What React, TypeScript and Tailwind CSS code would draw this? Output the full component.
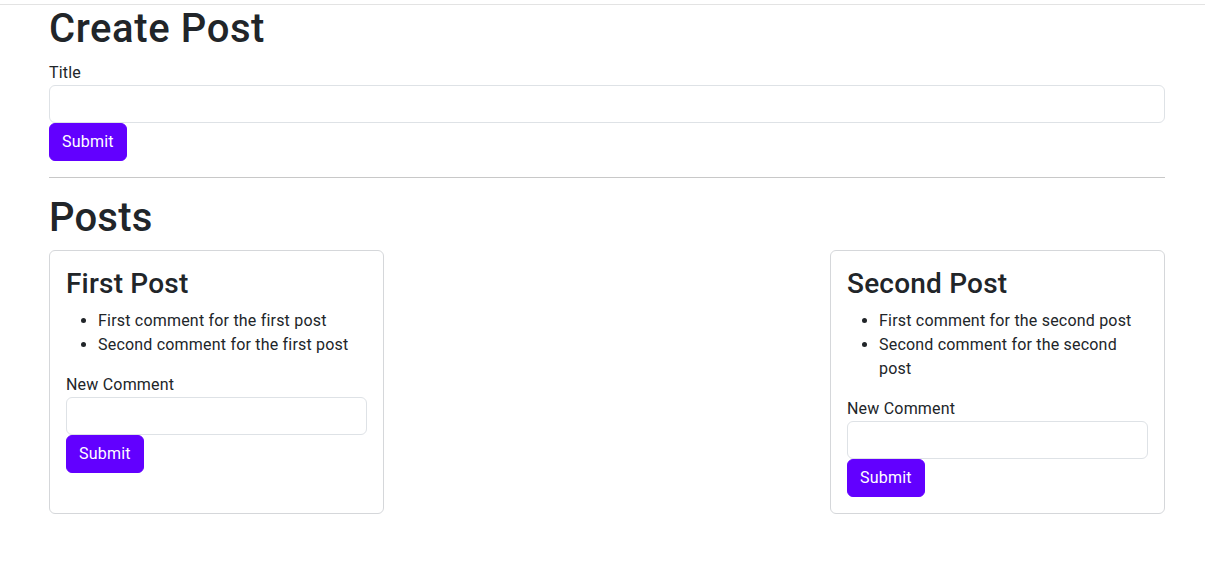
import React from 'react';

const posts = [
  {
    title: 'First Post',
    comments: ['First comment for the first post', 'Second comment for the first post'],
  },
  {
    title: 'Second Post',
    comments: ['First comment for the second post', 'Second comment for the second post'],
  },
];

const SubmitButton = () => (
  <button
    type="button"
    className="bg-[#6200ff] text-white text-base leading-6 px-3 py-[6px] rounded-[6px] border border-[#6200ff] self-start tracking-[0.2px]"
  >
    Submit
  </button>
);

const PostCard = ({ title, comments }: { title: string; comments: string[] }) => (
  <div className="w-[335px] border border-[#d5d7da] rounded-[6px] p-4 flex flex-col">
    <h3 className="text-[28px] leading-[1.2] font-medium mb-2 tracking-[0.2px]">{title}</h3>
    <ul className="list-disc pl-8 mb-4">
      {comments.map((c) => (
        <li key={c} className="leading-6">
          {c}
        </li>
      ))}
    </ul>
    <label className="leading-6">New Comment</label>
    <input className="h-[38px] w-full border border-[#dee2e6] rounded-[6px] px-3" />
    <SubmitButton />
  </div>
);

const App = () => {
  return (
    <div
      className="min-h-screen bg-white text-[#212529] text-base tracking-[0.2px]"
      style={{ fontFamily: 'Roboto, sans-serif' }}
    >
      <div className="h-[5px] border-b border-[#e3e3e3]" />
      <div className="w-[1116px] ml-[49px] flex flex-col">
        <h1 className="text-[40px] leading-[1.2] font-medium mb-2 tracking-[0.6px]">Create Post</h1>
        <label className="leading-6">Title</label>
        <input className="h-[38px] w-full border border-[#dee2e6] rounded-[6px] px-3" />
        <SubmitButton />
        <hr className="my-4 border-t border-[#c8c8c8]" />
        <h1 className="text-[40px] leading-[1.2] font-medium mb-2">Posts</h1>
        <div className="flex justify-between items-stretch">
          {posts.map((p) => (
            <PostCard key={p.title} title={p.title} comments={p.comments} />
          ))}
        </div>
      </div>
    </div>
  );
};

export default App;
